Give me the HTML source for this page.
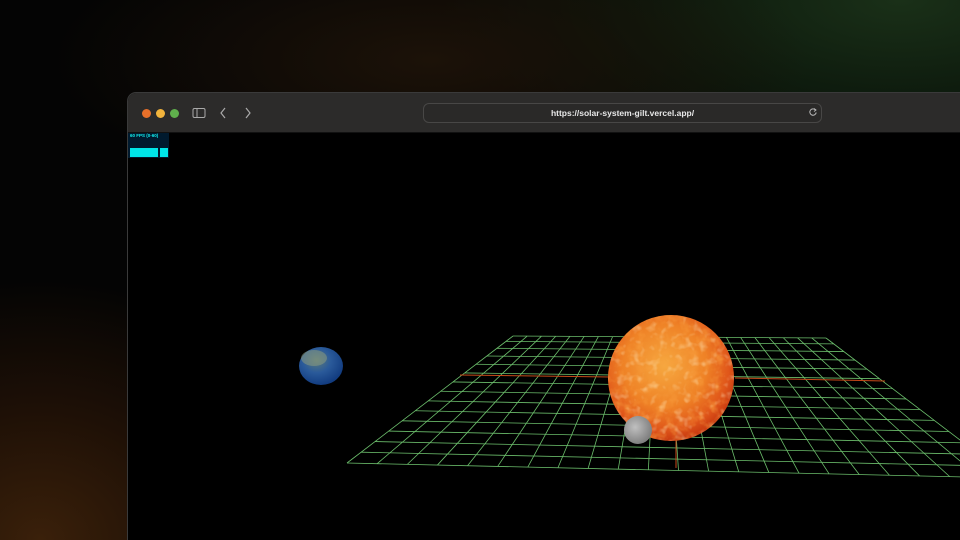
<!DOCTYPE html>
<html><head><meta charset="utf-8"><style>
html,body{margin:0;padding:0;width:960px;height:540px;overflow:hidden;background:#000;font-family:"Liberation Sans",sans-serif;position:relative}
.bg{position:absolute;left:0;top:0;width:960px;height:540px;background:
radial-gradient(ellipse 300px 260px at 40px 540px,#3a200a 0%,#1e1006 50%,rgba(0,0,0,0) 100%),
radial-gradient(ellipse 380px 140px at 430px 60px,#1c1208 0%,rgba(0,0,0,0) 100%),
radial-gradient(ellipse 460px 200px at 900px 0px,#1a3018 0%,#0c180c 55%,rgba(0,0,0,0) 100%),#040404}
.win{position:absolute;left:127px;top:92px;width:840px;height:447px;background:#000;border:1px solid #3a3a3a;border-bottom:none;border-radius:9px 0 0 0;overflow:hidden}
.bar{position:absolute;left:0;top:0;right:0;height:39px;background:#2c2b2a;border-bottom:1px solid #111}
.dot{position:absolute;top:16px;width:9px;height:9px;border-radius:50%}
.url{position:absolute;left:295px;top:10px;width:397px;height:18px;border:1px solid #484746;border-radius:6px;background:#2a2928;color:#e8e8e8;font-size:8.5px;font-weight:bold;text-align:center;line-height:18px}
</style></head><body>
<div class="bg"></div>
<div class="win">
<div class="bar">
<div class="dot" style="left:14px;background:#e8702a"></div>
<div class="dot" style="left:28px;background:#f2b43c"></div>
<div class="dot" style="left:42px;background:#5fb04c"></div>
<svg style="position:absolute;left:64px;top:14px" width="14" height="12"><rect x="1" y="1.5" width="12" height="9" rx="1.5" fill="none" stroke="#aaa" stroke-width="1"/><line x1="5" y1="1.5" x2="5" y2="10.5" stroke="#aaa"/></svg>
<svg style="position:absolute;left:90px;top:13px" width="12" height="14"><path d="M7 2 L3 7 L7 12" fill="none" stroke="#aaa" stroke-width="1.2"/></svg>
<svg style="position:absolute;left:114px;top:13px" width="12" height="14"><path d="M4 2 L8 7 L4 12" fill="none" stroke="#aaa" stroke-width="1.2"/></svg>
<div class="url">https://solar-system-gilt.vercel.app/</div>
<svg style="position:absolute;left:680px;top:14px" width="10" height="10"><path d="M7.5 3 A3.2 3.2 0 1 0 8.2 5.5" fill="none" stroke="#bbb" stroke-width="1"/><path d="M6 1.5 L8 3 L6 4.5" fill="none" stroke="#bbb" stroke-width="0.9"/></svg>
</div>
<div style="position:absolute;left:0;top:40px;width:41px;height:25px;background:#001a2e"></div>
<div style="position:absolute;left:2px;top:40px;font-size:4.5px;color:#1ee;font-weight:bold">60 FPS (0-60)</div>
<div style="position:absolute;left:2px;top:55px;width:28px;height:9px;background:#00e5e8"></div>
<div style="position:absolute;left:32px;top:55px;width:8px;height:9px;background:#00e5e8"></div>
</div>
<svg style="position:absolute;left:0;top:0" width="960" height="540">
<defs>
<radialGradient id="sun" cx="45%" cy="40%" r="60%">
<stop offset="0" stop-color="#f6a840"/><stop offset="0.55" stop-color="#ef8226"/><stop offset="0.85" stop-color="#e0561a"/><stop offset="1" stop-color="#c83a10"/></radialGradient>
<filter id="mottle" x="0" y="0" width="100%" height="100%"><feTurbulence type="fractalNoise" baseFrequency="0.09" numOctaves="3" seed="4"/><feColorMatrix type="matrix" values="0 0 0 0 0.95  0 0 0 0 0.35  0 0 0 0 0.05  0 0 0 1.6 -0.75"/><feComposite in2="SourceGraphic" operator="in"/></filter>
<filter id="light" x="0" y="0" width="100%" height="100%"><feTurbulence type="fractalNoise" baseFrequency="0.12" numOctaves="2" seed="9"/><feColorMatrix type="matrix" values="0 0 0 0 1  0 0 0 0 0.85  0 0 0 0 0.55  0 0 0 1.8 -0.95"/><feComposite in2="SourceGraphic" operator="in"/></filter>
<radialGradient id="earth" cx="40%" cy="35%" r="65%"><stop offset="0" stop-color="#5d7a78"/><stop offset="0.5" stop-color="#2a5a9a"/><stop offset="1" stop-color="#123c80"/></radialGradient>
<radialGradient id="moon" cx="40%" cy="40%" r="60%"><stop offset="0" stop-color="#c0c0c0"/><stop offset="1" stop-color="#808080"/></radialGradient>
</defs>
<g id="grid" stroke="#7fe07f" stroke-width="0.8" opacity="0.85"></g>
<line x1="460" y1="375" x2="610" y2="377" stroke="#c84818" stroke-width="1"/>
<line x1="735" y1="378" x2="885" y2="381" stroke="#c84818" stroke-width="1"/>
<line x1="676" y1="440" x2="676" y2="468" stroke="#c84818" stroke-width="1"/>
<ellipse cx="671" cy="378" rx="63" ry="63" fill="url(#sun)"/>
<ellipse cx="671" cy="378" rx="63" ry="63" fill="#000" filter="url(#mottle)"/>
<ellipse cx="671" cy="378" rx="63" ry="63" fill="#000" filter="url(#light)" opacity="0.8"/>
<ellipse cx="638" cy="430" rx="14" ry="14" fill="url(#moon)"/>
<ellipse cx="321" cy="366" rx="22" ry="19" fill="url(#earth)"/>
<ellipse cx="314" cy="358" rx="13" ry="8" fill="#8a9a80" opacity="0.55"/>
</svg>
<script>
var g=document.getElementById('grid');
var A=[513,336],B=[826,338],C=[1010,478],D=[347,463];
function P(u,v){var t=[A[0]+(B[0]-A[0])*u,A[1]+(B[1]-A[1])*u],b=[D[0]+(C[0]-D[0])*u,D[1]+(C[1]-D[1])*u];return [t[0]+(b[0]-t[0])*v,t[1]+(b[1]-t[1])*v];}
function f(v){return Math.pow(v,1.2);}
var s='',N=22,M=14;
for(var i=0;i<=N;i++){var u=i/N,p=P(u,0),q=P(u,1);s+='<line x1="'+p[0]+'" y1="'+p[1]+'" x2="'+q[0]+'" y2="'+q[1]+'"/>';}
for(var j=0;j<=M;j++){var v=f(j/M),p=P(0,v),q=P(1,v);s+='<line x1="'+p[0]+'" y1="'+p[1]+'" x2="'+q[0]+'" y2="'+q[1]+'"/>';}
g.innerHTML=s;
</script>
</body></html>
